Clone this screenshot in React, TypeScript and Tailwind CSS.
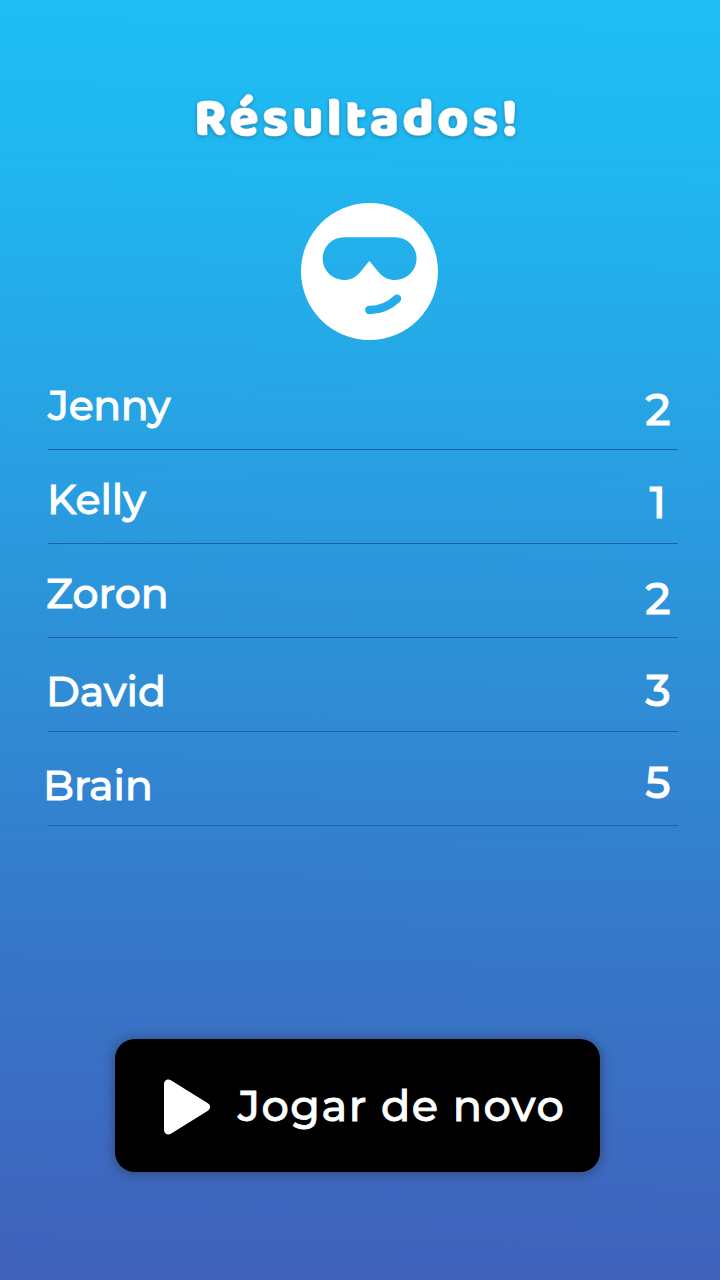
import clsx from 'clsx';

const results = [
  {
    name: 'Jenny',
    score: 2,
    nameClass: 'pt-[29px] tracking-[-0.4px]',
    scoreClass: 'pt-[31px]',
  },
  {
    name: 'Kelly',
    score: 1,
    nameClass: 'pt-[29px] -ml-px tracking-[-0.1px]',
    scoreClass: 'pt-[30px]',
  },
  {
    name: 'Zoron',
    score: 2,
    nameClass: 'pt-[29px] -ml-[2px]',
    scoreClass: 'pt-[32px]',
  },
  {
    name: 'David',
    score: 3,
    nameClass: 'pt-[33px] -ml-[2px] tracking-[-0.1px]',
    scoreClass: 'pt-[30px]',
  },
  {
    name: 'Brain',
    score: 5,
    nameClass: 'pt-[33px] -ml-[5px]',
    scoreClass: 'pt-[28px]',
  },
];

const CoolFace = () => (
  <svg width="137" height="137" viewBox="0 0 137 137" aria-hidden="true">
    <mask id="face">
      <circle cx="68.5" cy="68.5" r="68.5" fill="white" />
      <path
        d="M43 34.2H94.2A21.4 21.4 0 0 1 94.2 77C87.5 77 82.5 74.5 78.3 70L68.3 58L58.5 70C54.3 74.5 49.5 77 43 77A21.4 21.4 0 0 1 43 34.2Z"
        fill="black"
      />
      <path
        d="M68.3 107Q84.5 107 96 95.8"
        fill="none"
        stroke="black"
        strokeWidth="8.4"
        strokeLinecap="round"
      />
    </mask>
    <rect width="137" height="137" fill="white" mask="url(#face)" />
  </svg>
);

const PlayIcon = () => (
  <svg width="46" height="56" viewBox="0 0 46 56" aria-hidden="true">
    <path
      d="M4.5 5V51L41.5 28Z"
      fill="white"
      stroke="white"
      strokeWidth="9"
      strokeLinejoin="round"
    />
  </svg>
);

export default function App() {
  return (
    <main className="flex h-[1280px] w-[720px] flex-col overflow-hidden bg-[linear-gradient(181deg,#1fbef5_0%,#20b6ef_14%,#26a7e6_29%,#2d91d8_50%,#3678c8_73%,#4061bb_100%)] font-['Montserrat','Inter',sans-serif] text-white">
      <h1 className="mt-[95px] ml-[194px] h-[50px] whitespace-nowrap font-['Baloo','Baloo_2','Baloo_Bhai','Lato',sans-serif] text-[54px] leading-[50px] font-black tracking-[3.2px] [-webkit-text-stroke:1px_white] [paint-order:stroke_fill] [text-shadow:0_1px_4px_rgba(0,40,80,0.45)]">
        Résultados!
      </h1>

      <div className="mt-[58px] ml-[301px] h-[137px]">
        <CoolFace />
      </div>

      <ul className="mt-4 mr-[42px] ml-12">
        {results.map(({ name, score, nameClass, scoreClass }) => (
          <li
            key={name}
            className="flex h-[94px] items-start justify-between border-b border-[#1b62a8]"
          >
            <span
              className={clsx(
                'text-[41px] leading-none font-medium [-webkit-text-stroke:0.8px_white]',
                nameClass,
              )}
            >
              {name}
            </span>
            <span
              className={clsx(
                'w-[40px] text-center text-[44px] leading-none font-medium [-webkit-text-stroke:1px_white]',
                scoreClass,
              )}
            >
              {score}
            </span>
          </li>
        ))}
      </ul>

      <button
        type="button"
        className="mt-[213px] ml-[115px] flex h-[133px] w-[485px] items-center rounded-[20px] bg-black pt-[2px] pl-[49px] shadow-[0_1px_10px_2px_rgba(45,55,80,0.55)]"
      >
        <PlayIcon />
        <span className="ml-[28px] whitespace-nowrap text-[43px] font-medium tracking-[1.5px] [-webkit-text-stroke:0.8px_white]">
          Jogar de novo
        </span>
      </button>
    </main>
  );
}
